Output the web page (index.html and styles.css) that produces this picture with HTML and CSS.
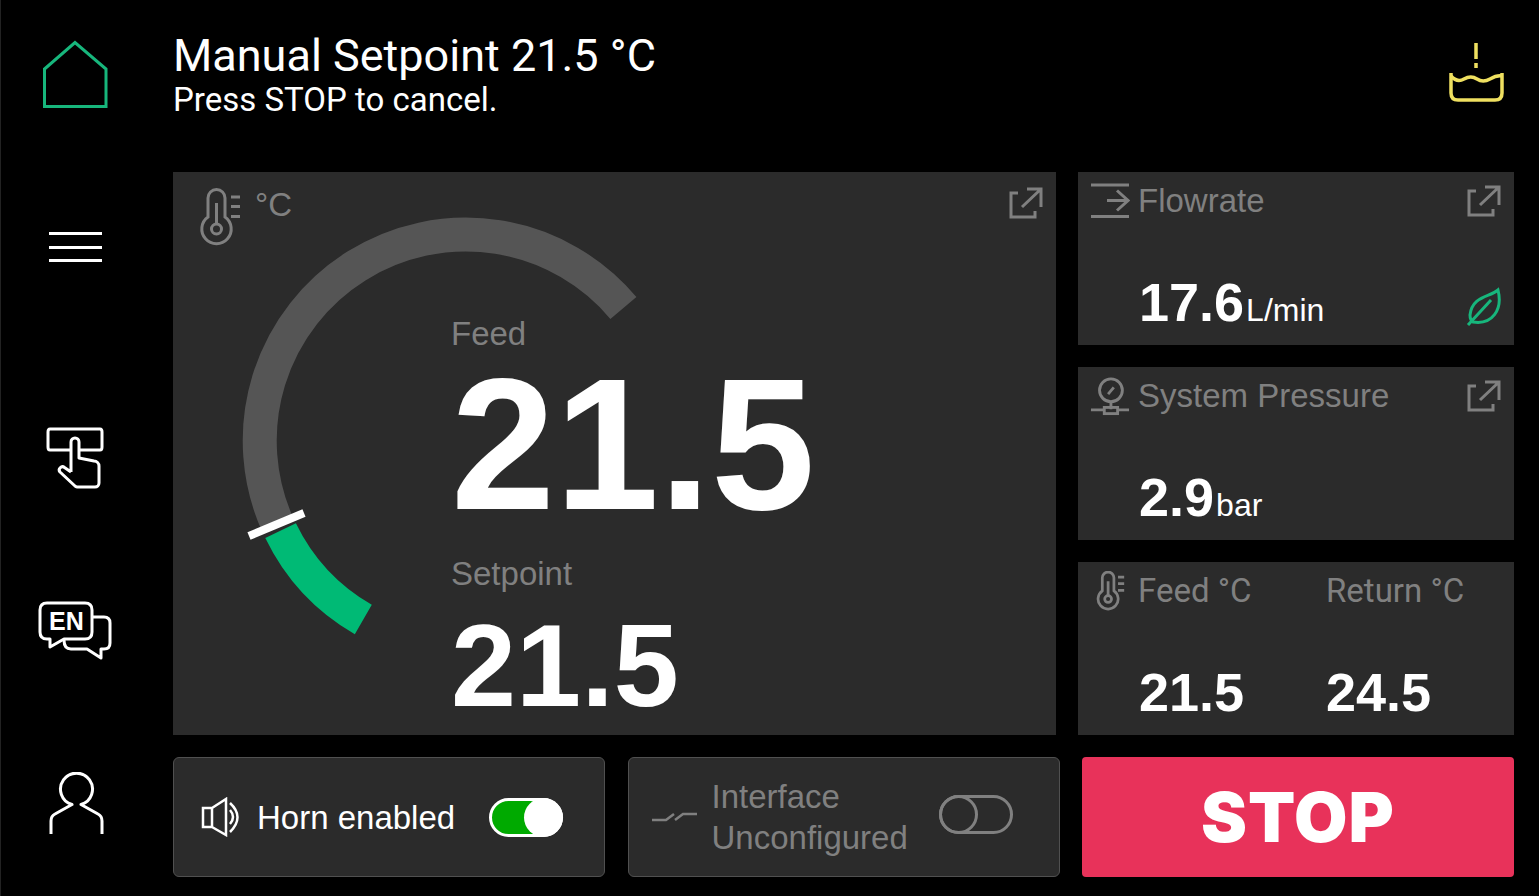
FILE: index.html
```html
<!DOCTYPE html>
<html lang="en">
<head>
  <meta charset="UTF-8" />
  <title>Manual Setpoint</title>
  <link rel="stylesheet" href="styles.css">
</head>
<body>
  <svg class="defs" width="0" height="0">
    <symbol id="thermo" viewBox="0 0 42 60">
      <path d="M9 29 V10 a8.500 8.500 0 0 1 17 0 V29 a14.700 14.700 0 1 1 -17 0 Z" />
      <circle cx="17.500" cy="41" r="5" />
      <path d="M17.500 36 V15" />
      <path d="M32 9 H41 M32 18.500 H41 M32 28.500 H41" />
    </symbol>
    <symbol id="open" viewBox="0 0 34 32">
      <path d="M9 6 H2 V30 H26 V24" />
      <path d="M13 20 L32 2 M18 2 H32 V20" />
    </symbol>
  </svg>

  <div class="app">
    <nav class="rail">
      <svg class="rail-icon home" width="70" height="72" viewBox="40 38 70 72"><path d="M44.500 105.500 V68 L75 41.500 L106 68 V105.500 Z" /></svg>
      <div class="burger"><span></span><span></span><span></span></div>
      <svg class="rail-icon touch" width="60" height="64" viewBox="45 427 60 64">
        <path d="M71 451 H50 Q48 451 48 448 V433 Q48 430 50 430 H100 Q102 430 102 433 V448 Q102 451 100 451 H79" />
        <path d="M71 473 V443 a4 4 0 0 1 8 0 V459 L94 462 a5 5 0 0 1 5 5 V484 a4 4 0 0 1 -4 4 H77 a3 3 0 0 1 -2 -1 L60 473 a3.200 3.200 0 0 1 4.500 -4.500 L71 473" />
      </svg>
      <svg class="rail-icon lang" width="76" height="62" viewBox="37 600 76 62">
        <path d="M47 603 H85 Q92 603 92 610 V632 Q92 639 85 639 H64 L50 647 V639 H47 Q40 639 40 632 V610 Q40 603 47 603 Z" />
        <path d="M93 617 H104 Q110 617 110 623 V643 Q110 649 104 649 H101 V658 L87 649 H71 Q64 649 64 640" />
        <text x="49" y="630" class="lang-text">EN</text>
      </svg>
      <svg class="rail-icon user" width="60" height="64" viewBox="45 771 60 64"><path d="M51 833 V820 Q51 815 55 813 L72 803.500 A16 16 0 1 1 81 803.500 L98 813 Q102 815 102 820 V833" /></svg>
    </nav>

    <div class="content">
      <header class="top">
        <div class="headline">
          <h1>Manual Setpoint 21.5 °C</h1>
          <p>Press STOP to cancel.</p>
        </div>
        <svg class="warn" width="60" height="64" viewBox="1447 41 60 64">
          <path d="M1476 43 V59 M1476 63 V68" />
          <path d="M1451 73 V93 Q1451 100 1458 100 H1495 Q1502 100 1502 93 V73" />
          <path d="M1451 76 Q1457 83 1464 79 T1477 79 T1490 79 T1502 76" />
        </svg>
      </header>

      <section class="panels">
        <div class="panel gauge">
          <svg class="dial" width="883" height="563" viewBox="0 0 883 563">
            <path class="dial-track" d="M450.400 136 A206 206 0 0 0 104.600 352.500" />
            <path class="dial-value" d="M107.600 358.700 A206 206 0 0 0 190.300 447.600" />
            <path class="dial-tick" d="M76 364 L131 341" />
          </svg>
          <svg class="icon thermo-big" width="42" height="60"><use href="#thermo" /></svg>
          <span class="unit-label">°C</span>
          <svg class="icon open-big" width="34" height="32"><use href="#open" /></svg>
          <div class="readings">
            <div class="label">Feed</div>
            <div class="big">21.5</div>
            <div class="label setpoint-label">Setpoint</div>
            <div class="medium">21.5</div>
          </div>
        </div>

        <div class="side">
          <div class="panel card">
            <div class="card-head">
              <svg class="icon card-icon" width="40" height="36" viewBox="0 0 40 36">
                <path d="M1 2 H39 M1 33.500 H39 M17 17.500 H38 M27 7.500 L38 17.500 L27 27.500" />
              </svg>
              <span class="label">Flowrate</span>
              <svg class="icon card-open" width="34" height="32"><use href="#open" /></svg>
            </div>
            <div class="value"><b>17.6</b><span>L/min</span>
              <svg class="leaf" width="36" height="40" viewBox="1466 287 36 40">
                <path d="M1498 290 C1490 297 1472 296 1470 315 Q1470 320 1473 322 C1492 325 1503 310 1498 290 Z M1468 325 L1491 300" />
              </svg>
            </div>
          </div>

          <div class="panel card">
            <div class="card-head">
              <svg class="icon card-icon" width="40" height="40" viewBox="1089 377 40 42">
                <circle cx="1110" cy="392" r="12" />
                <path d="M1107 396 L1113 389 M1110 404 V412 M1089 412.500 H1103 M1117 412.500 H1129" />
                <rect x="1103" y="410" width="14" height="6.500" />
              </svg>
              <span class="label">System Pressure</span>
              <svg class="icon card-open" width="34" height="32"><use href="#open" /></svg>
            </div>
            <div class="value"><b>2.9</b><span>bar</span></div>
          </div>

          <div class="panel card temps">
            <div class="temp">
              <div class="card-head">
                <svg class="icon thermo-small" width="29" height="41"><use href="#thermo" /></svg>
                <span class="label temp-label">Feed °C</span>
              </div>
              <div class="value"><b>21.5</b></div>
            </div>
            <div class="temp">
              <div class="card-head"><span class="label temp-label">Return °C</span></div>
              <div class="value"><b>24.5</b></div>
            </div>
          </div>
        </div>
      </section>

      <section class="actions">
        <div class="action">
          <svg class="speaker" width="40" height="40" viewBox="201 797 40 40">
            <path d="M203 808 H212 V827 H203 Z M212 808 L226 799 V835 L212 827" />
            <path d="M230 810 Q236 817 230 824 M230 803 Q245 817 230 832" />
          </svg>
          <span class="action-text">Horn enabled</span>
          <div class="toggle on"></div>
        </div>
        <div class="action off">
          <svg class="icon switch" width="46" height="10" viewBox="651 821 46 10">
            <path d="M652 829 H666 L674 823 M675 829 L683 823 H697" />
          </svg>
          <span class="action-text">Interface<br>Unconfigured</span>
          <div class="toggle"></div>
        </div>
        <button class="stop">STOP</button>
      </section>
    </div>
  </div>
</body>
</html>
```

FILE: styles.css
```css
:root {
  --panel: #2b2b2b;
  --muted: #808080;
  --green: #17b67c;
  --arial: "Liberation Sans", sans-serif;
}
html, body {
  height: 100%;
}
body {
  margin: 0;
  background-color: #000;
  color: #fff;
  font-family: Roboto, sans-serif;
  overflow: hidden;
  border-left: 1px solid #222;
  box-sizing: border-box;
}
svg {
  fill: none;
  stroke-width: 3;
  display: block;
}
.defs {
  position: absolute;
}
.app {
  display: flex;
  height: 896px;
}

.rail {
  width: 172px;
  flex: none;
  display: flex;
  flex-direction: column;
  align-items: center;
  padding: 39px 24px 0 0;
  box-sizing: border-box;
}
.rail-icon {
  stroke: #fff;
  stroke-linejoin: round;
}
.home {
  stroke: var(--green);
  stroke-linejoin: miter;
}
.burger {
  width: 53px;
  margin-top: 121px;
  display: flex;
  flex-direction: column;
  gap: 10.500px;
}
.burger span {
  height: 3px;
  background-color: #fff;
}
.touch {
  margin-top: 164px;
}
.lang {
  margin-top: 110px;
}
.lang-text {
  font-family: var(--arial);
  font-weight: 700;
  font-size: 25px;
  fill: #fff;
  stroke: none;
}
.user {
  margin-top: 110px;
}

.content {
  width: 1341px;
  flex: none;
}
.top {
  height: 172px;
  display: flex;
  justify-content: space-between;
  box-sizing: border-box;
  padding-top: 30px;
}
.top h1 {
  margin: 0;
  font-weight: 400;
  font-size: 45px;
  line-height: 51px;
}
.top p {
  margin: 0;
  font-size: 33px;
  line-height: 38px;
}
.warn {
  stroke: #efe060;
  stroke-width: 3.500;
  margin: 11px 7px 0 0;
}

.panels {
  display: grid;
  grid-template-columns: 883px 436px;
  gap: 22px;
  height: 563px;
}
.panel {
  background-color: var(--panel);
}
.icon {
  stroke: var(--muted);
}
.label {
  color: var(--muted);
  font-family: var(--arial);
  font-size: 33px;
  line-height: 40px;
}
.temp-label {
  font-family: Roboto, sans-serif;
}

.gauge {
  position: relative;
  padding-left: 278px;
}
.dial {
  position: absolute;
  left: 0;
  top: 0;
}
.dial-track {
  stroke: #555;
  stroke-width: 34;
}
.dial-value {
  stroke: #00ba75;
  stroke-width: 34;
}
.dial-tick {
  stroke: #fff;
  stroke-width: 8;
}
.thermo-big {
  position: absolute;
  left: 26px;
  top: 16px;
}
.unit-label {
  position: absolute;
  left: 82px;
  top: 13px;
  color: var(--muted);
  font-family: var(--arial);
  font-size: 33px;
  line-height: 40px;
}
.open-big {
  position: absolute;
  right: 13px;
  top: 15px;
}
.readings {
  position: relative;
  padding-top: 142px;
  font-family: var(--arial);
}
.big {
  font-weight: 700;
  font-size: 187px;
  line-height: 172px;
  margin-top: 5px;
}
.setpoint-label {
  margin-top: 23px;
}
.medium {
  font-weight: 700;
  font-size: 117px;
  line-height: 116px;
  margin-top: 14px;
}

.side {
  display: grid;
  grid-template-rows: repeat(3, 173px);
  gap: 22px;
}
.card {
  display: flex;
  flex-direction: column;
  justify-content: space-between;
  box-sizing: border-box;
  padding: 9px 13px 13px 12px;
}
.card-head {
  display: flex;
  align-items: center;
  gap: 8px;
  height: 40px;
}
.card-open {
  margin-left: auto;
}
.value {
  display: flex;
  align-items: baseline;
  padding-left: 49px;
  font-family: var(--arial);
  position: relative;
}
.value b {
  font-size: 54px;
  line-height: 60px;
}
.value span {
  font-size: 32px;
  margin-left: 2px;
}
.leaf {
  position: absolute;
  right: -1px;
  bottom: 5px;
  stroke: var(--green);
}
.temps {
  flex-direction: row;
  justify-content: flex-start;
  gap: 0;
}
.temp {
  display: flex;
  flex-direction: column;
  justify-content: space-between;
  width: 187px;
}
.temp + .temp .card-head {
  padding-left: 49px;
}
.temp + .temp {
  width: auto;
}
.thermo-small {
  margin-left: 6px;
  margin-right: 5px;
  stroke-width: 4;
}

.actions {
  display: grid;
  grid-template-columns: repeat(3, 432px);
  gap: 22.500px;
  margin-top: 22px;
  height: 120px;
}
.action {
  display: flex;
  align-items: center;
  background-color: var(--panel);
  border: 1px solid #505050;
  border-radius: 6px;
  box-sizing: border-box;
  padding-left: 27px;
}
.speaker {
  stroke: #fff;
  stroke-width: 2.500;
}
.action-text {
  font-family: var(--arial);
  font-size: 33px;
  line-height: 41px;
  margin-left: 16px;
}
.toggle {
  width: 74px;
  height: 39px;
  margin-left: 34px;
  box-sizing: border-box;
  border: 3px solid #fff;
  border-radius: 20px;
  position: relative;
}
.toggle.on {
  background-color: #00aa00;
}
.toggle.on::after {
  content: "";
  position: absolute;
  right: -3px;
  top: -3px;
  width: 39px;
  height: 39px;
  border-radius: 50%;
  background-color: #fff;
}
.off {
  padding-left: 22px;
  color: var(--muted);
}
.switch {
  stroke-width: 2.500;
}
.off .action-text {
  margin-left: 15px;
}
.off .toggle {
  margin-left: 31px;
  border-color: var(--muted);
  margin-top: -6px;
}
.off .toggle::after {
  content: "";
  position: absolute;
  left: -3px;
  top: -3px;
  width: 39px;
  height: 39px;
  box-sizing: border-box;
  border: 3px solid var(--muted);
  border-radius: 50%;
}
.stop {
  background-color: #e8325a;
  color: #fff;
  border: none;
  border-radius: 4px;
  font-family: Inter, sans-serif;
  font-weight: 900;
  font-size: 69px;
  letter-spacing: 1px;
  padding: 0;
}
```
